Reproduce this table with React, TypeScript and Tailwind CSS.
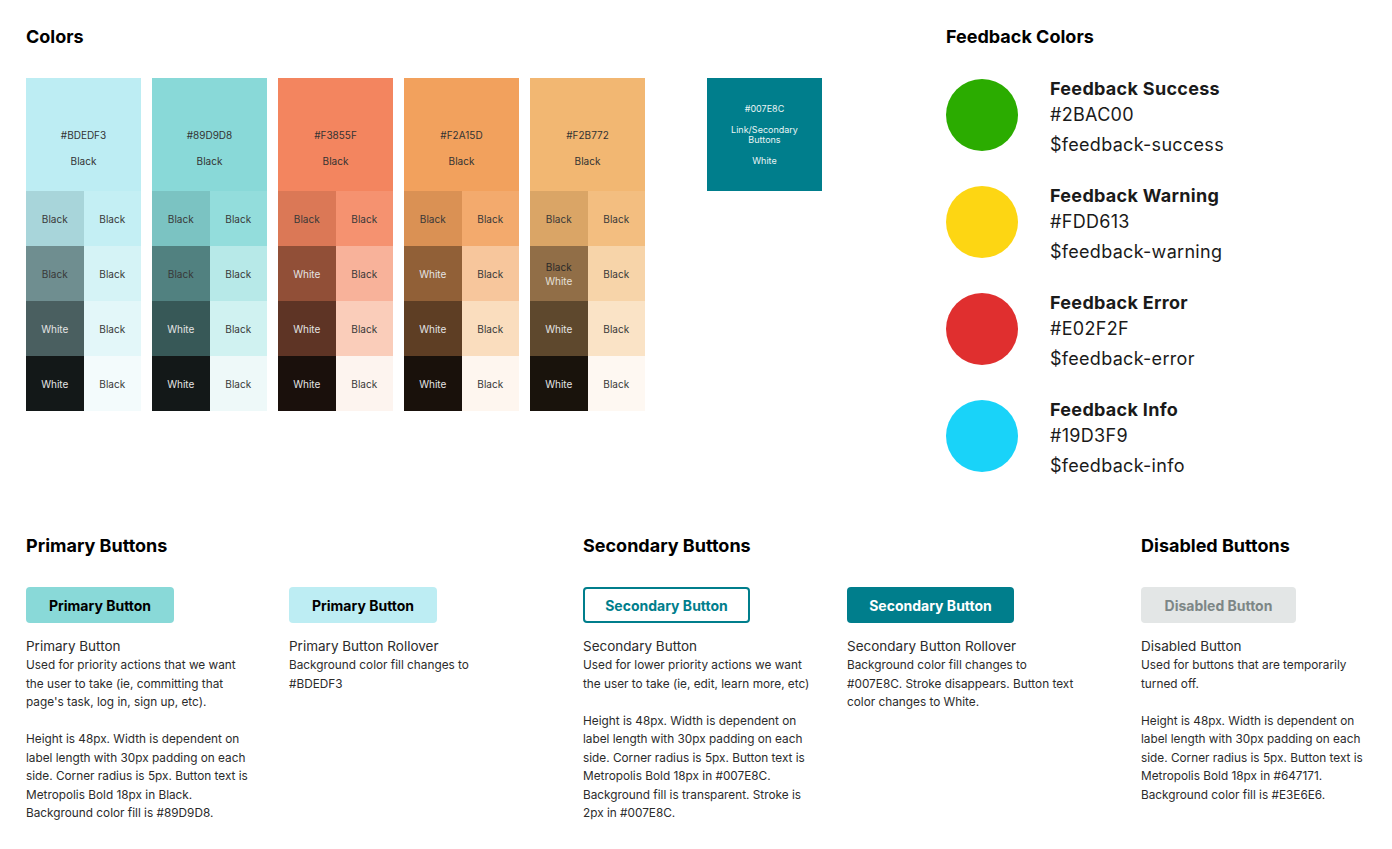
import React from "react";

type Cell = { bg: string; label: string; light?: boolean };
type Col = { hex: string; left: Cell[]; right: Cell[] };

const B = "Black";
const W = "White";

const cols: Col[] = [
  {
    hex: "#BDEDF3",
    left: [
      { bg: "#A8D5DA", label: B },
      { bg: "#6F8E90", label: B },
      { bg: "#4A5F60", label: W, light: true },
      { bg: "#131818", label: W, light: true },
    ],
    right: [
      { bg: "#C4EFF4", label: B },
      { bg: "#D5F3F6", label: B },
      { bg: "#E3F7F9", label: B },
      { bg: "#F3FBFC", label: B },
    ],
  },
  {
    hex: "#89D9D8",
    left: [
      { bg: "#7BC3C2", label: B },
      { bg: "#518180", label: B },
      { bg: "#375857", label: W, light: true },
      { bg: "#131818", label: W, light: true },
    ],
    right: [
      { bg: "#93DDDC", label: B },
      { bg: "#B7E9E8", label: B },
      { bg: "#D0F2F1", label: B },
      { bg: "#EEF9F9", label: B },
    ],
  },
  {
    hex: "#F3855F",
    left: [
      { bg: "#DB7856", label: B },
      { bg: "#914F37", label: W, light: true },
      { bg: "#5E3425", label: W, light: true },
      { bg: "#1A100C", label: W, light: true },
    ],
    right: [
      { bg: "#F59270", label: B },
      { bg: "#F8B29A", label: B },
      { bg: "#FACDBA", label: B },
      { bg: "#FDF4EF", label: B },
    ],
  },
  {
    hex: "#F2A15D",
    left: [
      { bg: "#DA9154", label: B },
      { bg: "#916037", label: W, light: true },
      { bg: "#5E3E24", label: W, light: true },
      { bg: "#19110B", label: W, light: true },
    ],
    right: [
      { bg: "#F3AA6D", label: B },
      { bg: "#F7C69C", label: B },
      { bg: "#FADDBE", label: B },
      { bg: "#FEF6EF", label: B },
    ],
  },
  {
    hex: "#F2B772",
    left: [
      { bg: "#DAA566", label: B },
      { bg: "#916E47", label: "mixed" },
      { bg: "#5E482D", label: W, light: true },
      { bg: "#19130C", label: W, light: true },
    ],
    right: [
      { bg: "#F3BE80", label: B },
      { bg: "#F7D4A9", label: B },
      { bg: "#FAE3C6", label: B },
      { bg: "#FEF8F2", label: B },
    ],
  },
];

const feedback = [
  { title: "Feedback Success", hex: "#2BAC00", v: "$feedback-success", color: "#2BAC00" },
  { title: "Feedback Warning", hex: "#FDD613", v: "$feedback-warning", color: "#FDD613" },
  { title: "Feedback Error", hex: "#E02F2F", v: "$feedback-error", color: "#E02F2F" },
  { title: "Feedback Info", hex: "#19D3F9", v: "$feedback-info", color: "#19D3F9" },
];

function ShadeCell({ c }: { c: Cell }) {
  return (
    <div
      className="h-[55px] flex flex-col items-center justify-center text-[10px] leading-[14px]"
      style={{ backgroundColor: c.bg }}
    >
      {c.label === "mixed" ? (
        <>
          <span className="text-[#2a2a2a]">Black</span>
          <span className="text-[#e6e0d8]">White</span>
        </>
      ) : (
        <span className={c.light ? "text-[#e4e4e4]" : "text-[#383838]"}>{c.label}</span>
      )}
    </div>
  );
}

function Swatch({ col }: { col: Col }) {
  return (
    <div className="w-[115px] flex flex-col">
      <div
        className="h-[113px] flex flex-col items-center pt-[51px] text-[10px] leading-[12px] text-[#333333]"
        style={{ backgroundColor: col.hex }}
      >
        <span>{col.hex}</span>
        <span className="mt-[14px]">Black</span>
      </div>
      <div className="grid grid-cols-2">
        {col.left.map((l, i) => (
          <React.Fragment key={i}>
            <ShadeCell c={l} />
            <ShadeCell c={col.right[i]} />
          </React.Fragment>
        ))}
      </div>
    </div>
  );
}

function Desc({ title, paras }: { title: string; paras: string[][] }) {
  return (
    <div className="mt-[13px] text-[#2b2b2b]">
      <div className="text-[13.5px] leading-[20px]">{title}</div>
      {paras.map((p, i) => (
        <div key={i} className={i > 0 ? "mt-[18.5px]" : ""}>
          {p.map((line, j) => (
            <div key={j} className="text-[11.8px] leading-[18.5px] whitespace-nowrap">
              {line}
            </div>
          ))}
        </div>
      ))}
    </div>
  );
}

export default function App() {
  return (
    <div
      className="w-[1392px] h-[849px] bg-white text-black overflow-hidden pl-[26px] pt-[27px]"
      style={{ fontFamily: "Inter, 'Noto Sans', sans-serif" }}
    >
      {/* Top row */}
      <div className="flex">
        <div className="w-[920px]">
          <h2 className="text-[18px] font-bold leading-[20px]">Colors</h2>
          <div className="flex mt-[31px] gap-[11px]">
            {cols.map((c) => (
              <Swatch key={c.hex} col={c} />
            ))}
            <div className="ml-[51px] w-[115px] h-[113px] bg-[#007E8C] flex flex-col items-center pt-[25px] text-[9px] text-[#e8f4f5] text-center">
              <span className="leading-[12px]">#007E8C</span>
              <span className="mt-[10px] leading-[10px]">Link/Secondary</span>
              <span className="leading-[10px]">Buttons</span>
              <span className="mt-[10px] leading-[12px]">White</span>
            </div>
          </div>
        </div>
        <div>
          <h2 className="text-[18px] font-bold leading-[20px]">Feedback Colors</h2>
          <div className="mt-[31px] flex flex-col gap-[26px]">
            {feedback.map((f) => (
              <div key={f.title} className="flex items-start">
                <div className="w-[72px] h-[72px] rounded-full mt-[1px] shrink-0" style={{ backgroundColor: f.color }} />
                <div className="ml-[32px] text-[#1a1a1a] tracking-[0.3px]">
                  <div className="text-[18px] font-bold leading-[22px]">{f.title}</div>
                  <div className="text-[18px] leading-[28px] mt-[1px]">{f.hex}</div>
                  <div className="text-[18px] leading-[28px] mt-[2px]">{f.v}</div>
                </div>
              </div>
            ))}
          </div>
        </div>
      </div>

      {/* Buttons */}
      <div className="flex mt-[56px]">
        <div className="w-[557px]">
          <h2 className="text-[18px] font-bold leading-[20px]">Primary Buttons</h2>
          <div className="flex mt-[31px]">
            <div className="w-[263px]">
              <div className="w-[148px] h-[36px] rounded-[4px] bg-[#89D9D8] flex items-center justify-center text-[14px] font-bold">
                Primary Button
              </div>
              <Desc
                title="Primary Button"
                paras={[
                  ["Used for priority actions that we want", "the user to take (ie, committing that", "page's task, log in, sign up, etc)."],
                  [
                    "Height is 48px. Width is dependent on",
                    "label length with 30px padding on each",
                    "side. Corner radius is 5px. Button text is",
                    "Metropolis Bold 18px in Black.",
                    "Background color fill is #89D9D8.",
                  ],
                ]}
              />
            </div>
            <div>
              <div className="w-[148px] h-[36px] rounded-[4px] bg-[#BDEDF3] flex items-center justify-center text-[14px] font-bold">
                Primary Button
              </div>
              <Desc title="Primary Button Rollover" paras={[["Background color fill changes to", "#BDEDF3"]]} />
            </div>
          </div>
        </div>
        <div className="w-[558px]">
          <h2 className="text-[18px] font-bold leading-[20px]">Secondary Buttons</h2>
          <div className="flex mt-[31px]">
            <div className="w-[264px]">
              <div className="w-[167px] h-[36px] rounded-[4px] border-2 border-[#007E8C] flex items-center justify-center text-[14px] font-bold text-[#007E8C]">
                Secondary Button
              </div>
              <Desc
                title="Secondary Button"
                paras={[
                  ["Used for lower priority actions we want", "the user to take (ie, edit, learn more, etc)"],
                  [
                    "Height is 48px. Width is dependent on",
                    "label length with 30px padding on each",
                    "side. Corner radius is 5px. Button text is",
                    "Metropolis Bold 18px in #007E8C.",
                    "Background fill is transparent. Stroke is",
                    "2px in #007E8C.",
                  ],
                ]}
              />
            </div>
            <div>
              <div className="w-[167px] h-[36px] rounded-[4px] bg-[#007E8C] flex items-center justify-center text-[14px] font-bold text-white">
                Secondary Button
              </div>
              <Desc
                title="Secondary Button Rollover"
                paras={[["Background color fill changes to", "#007E8C. Stroke disappears. Button text", "color changes to White."]]}
              />
            </div>
          </div>
        </div>
        <div>
          <h2 className="text-[18px] font-bold leading-[20px]">Disabled Buttons</h2>
          <div className="mt-[31px]">
            <div className="w-[155px] h-[36px] rounded-[4px] bg-[#E3E6E6] flex items-center justify-center text-[14px] font-bold text-[#7d8686]">
              Disabled Button
            </div>
            <Desc
              title="Disabled Button"
              paras={[
                ["Used for buttons that are temporarily", "turned off."],
                [
                  "Height is 48px. Width is dependent on",
                  "label length with 30px padding on each",
                  "side. Corner radius is 5px. Button text is",
                  "Metropolis Bold 18px in #647171.",
                  "Background color fill is #E3E6E6.",
                ],
              ]}
            />
          </div>
        </div>
      </div>
    </div>
  );
}
